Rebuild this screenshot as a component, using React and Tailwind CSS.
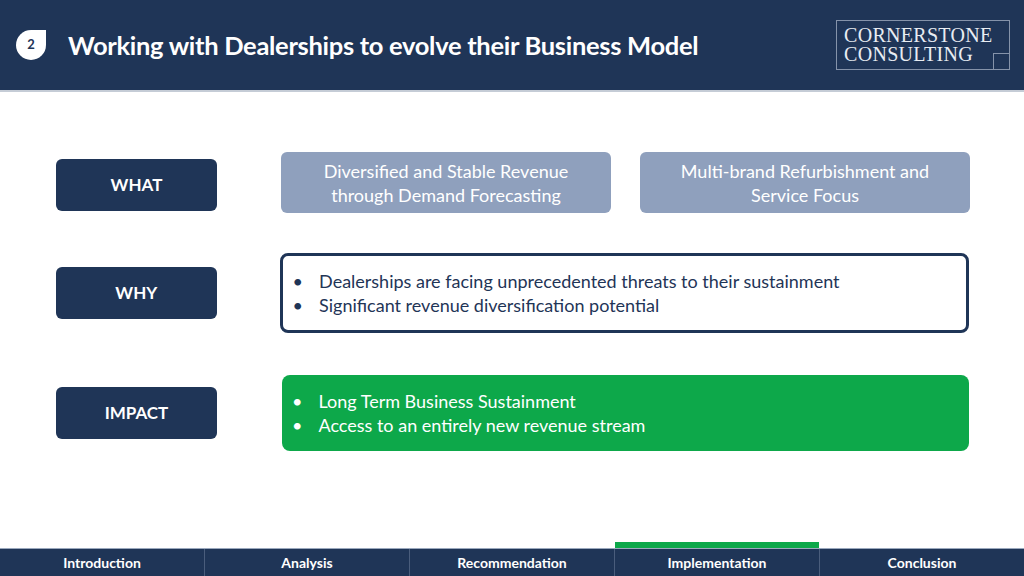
import React from 'react';

const Label = ({ children }) => (
  <div className="w-[161px] h-[52px] rounded-md bg-[#1f3557] text-white font-bold text-[17px] flex items-center justify-center">
    {children}
  </div>
);

const Bullets = ({ items }) => (
  <ul className="flex flex-col gap-[1px]">
    {items.map((t) => (
      <li key={t} className="flex gap-4 text-[18px] leading-[23px]">
        <span>•</span>
        <span>{t}</span>
      </li>
    ))}
  </ul>
);

const tabs = ['Introduction', 'Analysis', 'Recommendation', 'Implementation', 'Conclusion'];

export default function App() {
  return (
    <div className="w-[1024px] h-[576px] bg-white flex flex-col overflow-hidden" style={{ fontFamily: 'Lato, "Open Sans", sans-serif' }}>
      <header className="h-[92px] bg-[#1f3557] border-b-2 border-[#c5ccd6] flex items-center px-4 shrink-0">
        <div className="w-[30px] h-[30px] bg-white rounded-full rounded-tr-none flex items-center justify-center text-[#1f3557] text-[13px] font-bold">2</div>
        <h1 className="ml-[22px] text-white font-bold text-[25.5px] tracking-[-0.3px]">Working with Dealerships to evolve their Business Model</h1>
        <div className="ml-auto mr-[-2px] relative w-[174px] h-[50px] border border-[#8593aa] flex flex-col justify-center pl-[7px] text-[#e8ecf2] leading-[19px] text-[20px] tracking-[0.3px]" style={{ fontFamily: '"Liberation Serif", serif' }}>
          <span>CORNERSTONE</span>
          <span>CONSULTING</span>
          <div className="absolute right-[-1px] bottom-[-1px] w-[17px] h-[17px] border-l border-t border-[#8593aa]" />
        </div>
      </header>

      <main className="flex-1 flex flex-col pl-[56px] pr-[55px]">
        <div className="flex items-center mt-[60px]">
          <div className="mt-[5px]"><Label>WHAT</Label></div>
          <div className="ml-[64px] flex gap-[29px]">
            {['Diversified and Stable Revenue through Demand Forecasting', 'Multi-brand Refurbishment and Service Focus'].map((t) => (
              <div key={t} className="w-[330px] h-[61px] rounded-md bg-[#8fa0bd] text-white text-[18px] leading-[24px] flex items-center justify-center text-center px-8">{t}</div>
            ))}
          </div>
        </div>
        <div className="flex items-center mt-[40px]">
          <Label>WHY</Label>
          <div className="ml-[63px] w-[691px] h-[80px] rounded-lg border-[3px] border-[#1f3557] text-[#1f3557] flex items-center pl-[10px]">
            <Bullets items={['Dealerships are facing unprecedented threats to their sustainment', 'Significant revenue diversification potential']} />
          </div>
        </div>
        <div className="flex items-center mt-[42px]">
          <Label>IMPACT</Label>
          <div className="ml-[65px] w-[687px] h-[76px] rounded-lg bg-[#0da84a] text-white flex items-center pl-[10px]">
            <Bullets items={['Long Term Business Sustainment', 'Access to an entirely new revenue stream']} />
          </div>
        </div>
      </main>

      <nav className="h-[28px] bg-[#1f3557] border-t border-[#9aa8bd] flex shrink-0">
        {tabs.map((t, i) => (
          <div key={t} className={`relative flex-1 flex items-center justify-center text-white font-bold text-[14px] ${i > 0 ? 'border-l border-[#4a5d7c]' : ''}`}>
            {t === 'Implementation' && <div className="absolute left-0 right-0 top-[-7px] h-[6px] bg-[#0da84a]" />}
            {t}
          </div>
        ))}
      </nav>
    </div>
  );
}
